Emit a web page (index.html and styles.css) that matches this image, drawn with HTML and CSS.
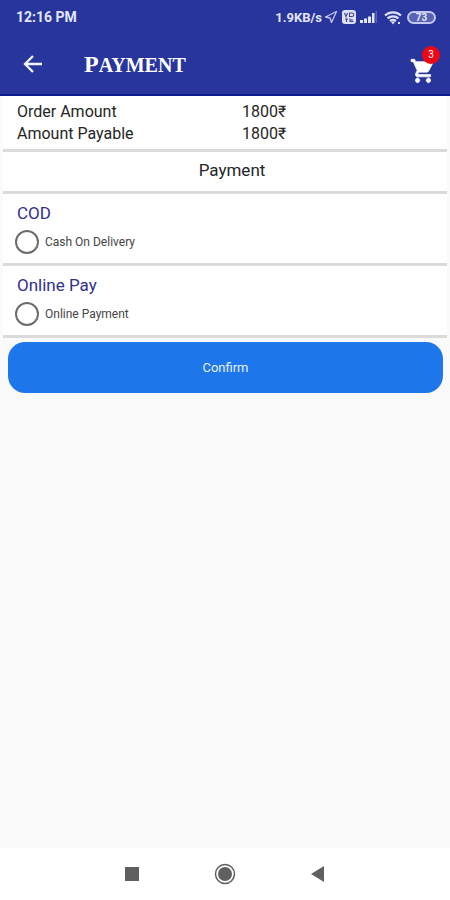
FILE: index.html
```html
<!DOCTYPE html>
<html lang="en">
<head>
<meta charset="utf-8">
<meta name="viewport" content="width=device-width, initial-scale=1">
<title>Payment</title>
<link rel="stylesheet" href="styles.css">
</head>
<body>
<header class="top">
  <div class="status">
    <span class="clock">12:16 PM</span>
    <div class="indicators">
      <span class="speed">1.9KB/s</span>
      <svg class="locate" width="14" height="14" viewBox="0 0 14 14" aria-hidden="true"><path d="M12.500 1.500 1.500 7l4.500 1 1.500 4.500z" fill="none" stroke="#c3c9ee" stroke-width="1.300" stroke-linejoin="round"/></svg>
      <svg class="volte" width="14" height="14" viewBox="0 0 14 14" aria-hidden="true"><rect width="14" height="14" rx="3" fill="#dfe2f6"/><path d="M2.500 3l1.500 3.500L5.500 3M7.500 3h2.500a1.500 1.500 0 0 1 0 3.500H7.500zM3 9h3M4.500 9v3M8 8.500v3h3.500M8 10h3" fill="none" stroke="#3d4799" stroke-width="1.100"/></svg>
      <svg class="signal" width="18" height="14" viewBox="0 0 18 14" aria-hidden="true"><path d="M0 10h3v3H0zM4 8.500h3V13H4zM8 6.500h3V13H8zM12 3h2.500v10H12z" fill="#e3e6f8"/><path d="M15.500 1H17v12h-1.500z" fill="#5862b6"/></svg>
      <svg class="wifi" width="19" height="15" viewBox="0 0 19 15" aria-hidden="true"><path d="M1 5.500a12 12 0 0 1 16 0M3.500 8.300a8.500 8.500 0 0 1 11 0M6 11a5 5 0 0 1 6 0" fill="none" stroke="#dce0f6" stroke-width="2.200"/><path d="M6.800 11.500h4.400L9 14.500zM14 12h2v2h-2z" fill="#dce0f6"/></svg>
      <span class="battery">73</span>
    </div>
  </div>
  <div class="bar">
    <button class="icon-button" type="button" aria-label="Back">
      <svg width="20" height="20" viewBox="0 0 20 20"><path d="M19 10H2M10 2l-8 8 8 8" fill="none" stroke="#f4f5ff" stroke-width="2.300"/></svg>
    </button>
    <h1 class="title">P<span class="title-rest">AYMENT</span></h1>
    <button class="icon-button cart" type="button" aria-label="Cart, 3 items">
      <svg width="26" height="28" viewBox="0 0 24 24" preserveAspectRatio="none"><path fill="#fff" stroke="#fff" stroke-width=".6" d="M7 18c-1.100 0-1.990.9-1.990 2S5.900 22 7 22s2-.9 2-2-.9-2-2-2zM1 2v2h2l3.600 7.590-1.350 2.450c-.16.280-.25.610-.25.960 0 1.100.9 2 2 2h12v-2H7.420c-.14 0-.25-.11-.25-.25l.03-.12.900-1.630h7.450c.75 0 1.410-.41 1.750-1.030l3.580-6.490A1 1 0 0 0 20 4H5.210l-.94-2H1zm16 16c-1.100 0-1.990.9-1.990 2s.89 2 1.990 2 2-.9 2-2-.9-2-2-2z"/></svg>
      <span class="badge">3</span>
    </button>
  </div>
</header>
<main class="content">
  <dl class="card amounts">
    <dt>Order Amount</dt><dd>1800₹</dd>
    <dt>Amount Payable</dt><dd>1800₹</dd>
  </dl>
  <h2 class="card heading">Payment</h2>
  <section class="card method">
    <h3 class="method-title">COD</h3>
    <label class="option"><input class="radio" type="radio" name="method" value="cod">Cash On Delivery</label>
  </section>
  <section class="card method">
    <h3 class="method-title">Online Pay</h3>
    <label class="option"><input class="radio" type="radio" name="method" value="online">Online Payment</label>
  </section>
  <button class="confirm" type="button">Confirm</button>
</main>
<nav class="system" aria-label="System">
  <button class="icon-button" type="button" aria-label="Recent apps"><svg width="22" height="22" viewBox="0 0 22 22"><path d="M4 4h14v14H4z" fill="#606060"/></svg></button>
  <button class="icon-button" type="button" aria-label="Home"><svg width="22" height="22" viewBox="0 0 22 22"><circle cx="11" cy="11" r="9.500" fill="none" stroke="#606060" stroke-width="1.500"/><circle cx="11" cy="11" r="7" fill="#606060"/></svg></button>
  <button class="icon-button" type="button" aria-label="Back"><svg width="22" height="22" viewBox="0 0 22 22"><path d="M17 3v16L4 11z" fill="#606060"/></svg></button>
</nav>
</body>
</html>
```
FILE: styles.css
```css
* {
  box-sizing: border-box;
}

body {
  margin: 0;
  min-height: 100vh;
  display: flex;
  flex-direction: column;
  background: #fafafa;
  color: #252525;
  font-family: Roboto, "Noto Sans", sans-serif;
}

h1, h2, h3, dl, dd {
  margin: 0;
  font-weight: 400;
}

button {
  font-family: inherit;
  border: 0;
}

.icon-button {
  display: flex;
  padding: 0;
  background: none;
}

.top {
  background: #28359c;
  border-bottom: 2px solid #0b1d8c;
  color: #fff;
}

.status {
  display: flex;
  align-items: center;
  justify-content: space-between;
  height: 34px;
  padding: 0 14px 0 16px;
  color: #e3e6f8;
}

.clock {
  font-size: 14px;
  font-weight: 700;
}

.indicators {
  display: flex;
  align-items: center;
}

.speed {
  font-size: 13px;
  font-weight: 700;
}

.locate {
  margin: 0 4px 0 2px;
}

.signal {
  margin: 0 6px 0 4px;
}

.wifi {
  margin-right: 4px;
}

.battery {
  width: 29px;
  height: 13px;
  border: 2px solid #c3c9ee;
  border-radius: 7px;
  background: #5963b5;
  font-size: 10px;
  font-weight: 700;
  line-height: 9px;
  text-align: center;
}

.bar {
  display: flex;
  align-items: center;
  height: 60px;
  padding: 0 14px 0 23px;
}

.title {
  flex: 1;
  margin-left: 41px;
  font-family: "Liberation Serif", serif;
  font-size: 24px;
  font-weight: 700;
  line-height: 28px;
}

.title-rest {
  font-size: 20px;
}

.cart {
  position: relative;
  margin-top: 14px;
}

.badge {
  position: absolute;
  top: -11px;
  right: -4px;
  width: 18px;
  height: 18px;
  border-radius: 50%;
  background: #f00612;
  color: #fff;
  font-size: 10px;
  line-height: 18px;
  text-align: center;
}

.content {
  flex: 1;
  padding: 0 3px;
}

.card {
  background: #fff;
  border-bottom: 3px solid #dadada;
}

.amounts {
  display: grid;
  grid-template-columns: 1fr 1fr;
  padding: 5px 0 4px 14px;
  font-size: 16px;
  line-height: 22px;
}

.amounts dd {
  padding-left: 10px;
}

.heading {
  padding: 7px 0 10px 14px;
  font-size: 17px;
  line-height: 22px;
  text-align: center;
}

.method {
  padding: 8px 12px 9px 14px;
}

.method-title {
  color: #30308c;
  font-size: 17px;
  line-height: 22px;
}

.option {
  display: flex;
  align-items: center;
  gap: 6px;
  height: 30px;
  padding-top: 6px;
  margin-left: -2px;
  font-size: 12px;
  color: #444;
}

.radio {
  appearance: none;
  width: 24px;
  height: 24px;
  margin: 0;
  border: 2px solid #6c6c6c;
  border-radius: 50%;
}

.radio:checked {
  background: radial-gradient(circle, #1e77ea 5px, transparent 6px);
}

.confirm {
  display: block;
  width: calc(100% - 9px);
  height: 51px;
  margin: 4px 4px 0 5px;
  border-radius: 17px;
  background: #1e77ea;
  color: #e8f1ff;
  font-size: 13px;
}

.system {
  display: flex;
  align-items: center;
  justify-content: center;
  gap: 71px;
  height: 52px;
  background: #fff;
}
```
